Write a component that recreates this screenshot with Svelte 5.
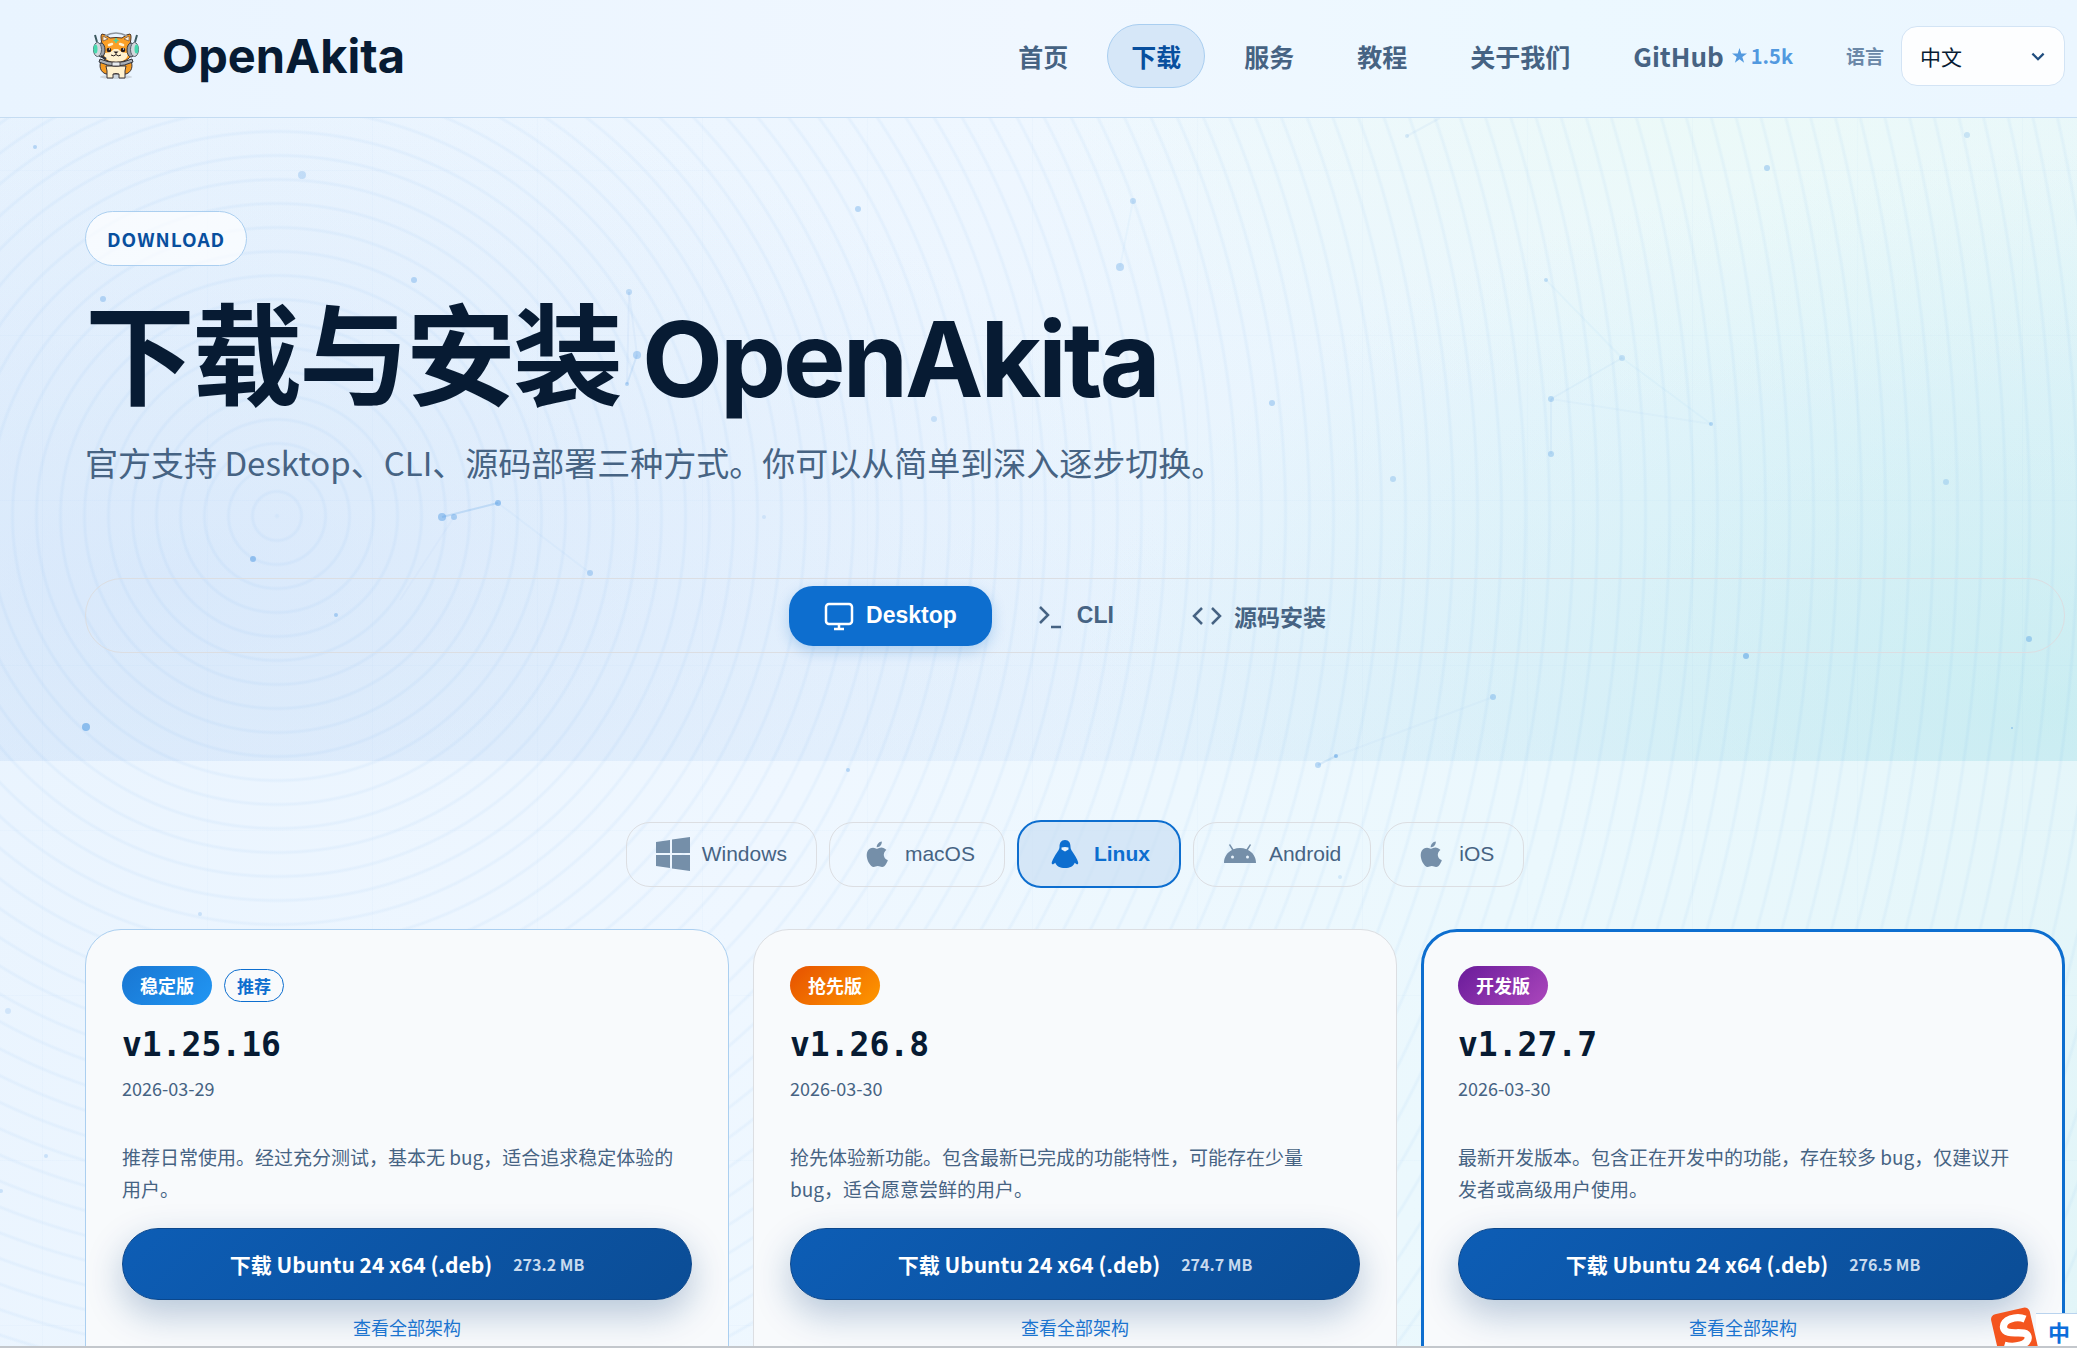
<script>
  let lang = $state('zh');
  const nav = [
    { label: '首页' },
    { label: '下载', active: true },
    { label: '服务' },
    { label: '教程' },
    { label: '关于我们' }
  ];
  const platforms = [
    { name: 'Windows', icon: 'windows' },
    { name: 'macOS', icon: 'apple' },
    { name: 'Linux', icon: 'linux', active: true },
    { name: 'Android', icon: 'android' },
    { name: 'iOS', icon: 'apple' }
  ];
  const releases = [
    { kind: 'stable', badge: '稳定版', recommended: true, version: 'v1.25.16', date: '2026-03-29', size: '273.2 MB',
      text: '推荐日常使用。经过充分测试，基本无 bug，适合追求稳定体验的用户。' },
    { kind: 'early', badge: '抢先版', version: 'v1.26.8', date: '2026-03-30', size: '274.7 MB',
      text: '抢先体验新功能。包含最新已完成的功能特性，可能存在少量 bug，适合愿意尝鲜的用户。' },
    { kind: 'dev', badge: '开发版', version: 'v1.27.7', date: '2026-03-30', size: '276.5 MB',
      text: '最新开发版本。包含正在开发中的功能，存在较多 bug，仅建议开发者或高级用户使用。' }
  ];
  // Particle field: x, y, radius, opacity
  const dots = [
    [35, 147, 2, 0.3], [302, 175, 4, 0.22], [858, 209, 3, 0.3], [1133, 201, 3, 0.25], [1407, 136, 2, 0.15],
    [1767, 168, 3, 0.3], [1967, 135, 3, 0.2], [414, 280, 3, 0.3], [103, 299, 3, 0.3], [629, 292, 3, 0.25],
    [1120, 267, 4, 0.28], [1546, 280, 2, 0.25], [637, 355, 4, 0.3], [627, 384, 2, 0.3], [934, 419, 3, 0.2],
    [1272, 403, 3, 0.3], [1622, 358, 3, 0.22], [1551, 399, 3, 0.28], [1711, 424, 2, 0.3], [1551, 454, 3, 0.28],
    [1393, 479, 3, 0.25], [1946, 482, 3, 0.22], [498, 503, 3, 0.45], [442, 517, 4, 0.4], [454, 517, 3, 0.35],
    [253, 559, 3, 0.45], [590, 573, 3, 0.3], [336, 615, 2, 0.35], [764, 517, 2, 0.12], [86, 727, 4, 0.5],
    [2029, 639, 3, 0.35], [1746, 656, 3, 0.45], [1493, 697, 3, 0.3], [2012, 728, 1, 0.4], [1336, 756, 2, 0.45],
    [1318, 765, 3, 0.3], [848, 770, 2, 0.3], [200, 914, 2, 0.2], [8, 1011, 3, 0.15], [46, 1156, 2, 0.2],
    [1340, 877, 2, 0.15], [1, 1191, 2, 0.2]
  ];
  const links = [
    [442, 517, 498, 503, 0.2], [498, 503, 590, 573, 0.04], [1336, 756, 1318, 765, 0.12], [629, 292, 627, 384, 0.06],
    [629, 292, 637, 355, 0.05], [637, 355, 627, 384, 0.12], [1546, 280, 1622, 358, 0.04], [1622, 358, 1551, 399, 0.05],
    [1551, 399, 1551, 454, 0.06], [1622, 358, 1711, 424, 0.04], [1551, 399, 1711, 424, 0.03], [1133, 201, 1120, 267, 0.04],
    [1493, 697, 1336, 756, 0.03], [454, 517, 400, 600, 0.03], [1407, 136, 1440, 118, 0.06]
  ];
</script>

{#snippet platformIcon(name)}
  {#if name === 'windows'}
    <svg class="picon" viewBox="0 0 34 34" aria-hidden="true"><path d="M0 5l14-2v13H0zM16 2.600L34 0v16H16zM0 18h14v13L0 29zM16 18h18v16l-18-2.600z" /></svg>
  {:else if name === 'apple'}
    <svg class="picon" viewBox="0 0 24 24" aria-hidden="true"><path d="M17.500 12.600c0-2.200 1.800-3.300 1.900-3.400-1-1.500-2.600-1.700-3.200-1.700-1.400-.1-2.700.8-3.400.8s-1.800-.8-2.900-.8C8.400 7.500 7 8.400 6.200 9.700c-1.600 2.800-.4 6.900 1.200 9.200.8 1.100 1.700 2.300 2.900 2.300s1.600-.7 3-.7 1.800.7 3 .7 2-1.100 2.800-2.200c.9-1.300 1.200-2.500 1.200-2.600-.1 0-2.800-1.100-2.800-3.800zM15.200 6c.6-.8 1-1.800.9-2.900-.9 0-2 .6-2.600 1.400-.6.7-1.100 1.700-1 2.700 1.100.1 2.100-.5 2.700-1.200z" /></svg>
  {:else if name === 'linux'}
    <svg class="picon" viewBox="0 0 34 34" aria-hidden="true">
      <path d="M17 3c-4 0-5.500 3-5.500 7 0 3-3.200 6-5 9.500-1.300 2.500-3.500 6-2.500 7.500.8 1 2.300-.6 3.300-1.300C8.500 29 12 31 17 31s8.500-2 9.700-5.300c1 .7 2.500 2.300 3.300 1.300 1-1.500-1.200-5-2.500-7.500-1.800-3.500-5-6.500-5-9.500 0-4-1.500-7-5.500-7z" />
      <path class="beak" d="M13.500 10.500q3.500-1 7 0v2L17 14.500l-3.500-2z" />
    </svg>
  {:else}
    <svg class="picon" viewBox="0 0 34 34" aria-hidden="true">
      <path d="M1 26c0-6 3.200-10.600 8-13L6 8l1-1 3.500 5.200c4-1.600 9-1.600 13 0L27 7l1 1-3 5c4.800 2.400 8 7 8 13z" />
      <circle class="hole" cx="9.500" cy="20" r="1.500" /><circle class="hole" cx="24.500" cy="20" r="1.500" />
    </svg>
  {/if}
{/snippet}

<div class="page">
  <div class="backdrop" aria-hidden="true">
    <div class="rings"></div>
    <svg class="particles">
      {#each links as [x1, y1, x2, y2, o]}
        <line {x1} {y1} {x2} {y2} stroke="#3c8fe0" stroke-width="2" stroke-opacity={o} />
      {/each}
      {#each dots as [cx, cy, r, o]}
        <circle {cx} {cy} {r} fill="#3c8fe0" fill-opacity={o} />
      {/each}
    </svg>
  </div>

  <header>
    <a class="brand" href="#home">
      <svg class="mascot" viewBox="0 0 56 56" aria-hidden="true">
        <ellipse cx="28" cy="49" rx="16" ry="2" fill="#cdd6df" />
        <path d="M13 33c-2 5-1 11 5 13h20c6-2 7-8 5-13z" fill="#f39a22" stroke="#3a3438" />
        <path d="M18 38h20l-1 5v7h-6v-4q-3-1-6 0v4h-6v-7z" fill="#fff1cf" stroke="#3a3438" />
        <path d="M14 16q-2-9 0-10 3 0 8 4 6-1 12 0 5-4 8-4 2 1 0 10c3 6 2 12-2 15-5 4-19 4-24 0-4-3-5-9-2-15z" fill="#fb9f25" stroke="#4a3428" />
        <path d="M15 13V8l5 3zM41 13V8l-5 3z" fill="#fff0d6" stroke="#5a4034" stroke-width=".6" />
        <path d="M16 25c4 0 7-1 10-4h4c3 3 6 4 10 4 0 6-5 9-12 9s-12-3-12-9z" fill="#fff1cf" />
        <path d="M17 8Q28 2 39 8" fill="none" stroke="#8d949c" stroke-width="1.500" />
        <path d="M21 17l3-1M35 17l-3-1" stroke="#fff1cf" stroke-width="2.500" stroke-linecap="round" />
        <path d="M28 10v5M25.500 12.500h5" stroke="#48d3a8" stroke-width="1.500" />
        <circle cx="21" cy="22" r="2.300" fill="#241c20" /><circle cx="35" cy="22" r="2.300" fill="#241c20" />
        <circle cx="21.500" cy="21" r=".7" fill="#fff" /><circle cx="35.500" cy="21" r=".7" fill="#fff" />
        <path d="M25.500 23.500h5L28 26z" fill="#241c20" />
        <path d="M23 27q3 2 5-.5 2 2.500 5 .5" fill="none" stroke="#241c20" />
        <ellipse cx="13" cy="22" rx="4" ry="7" fill="#9ba1a9" stroke="#33363c" /><ellipse cx="43" cy="22" rx="4" ry="7" fill="#9ba1a9" stroke="#33363c" />
        <ellipse cx="9.500" cy="21.500" rx="4" ry="7" fill="#d3d8dd" stroke="#55606a" /><ellipse cx="46.500" cy="21.500" rx="4" ry="7" fill="#d3d8dd" stroke="#55606a" />
        <ellipse cx="7.500" cy="21" rx="2" ry="4.500" fill="#46d9ae" /><ellipse cx="48.500" cy="21" rx="2" ry="4.500" fill="#46d9ae" />
        <path d="M9 14L7 7M47 14l2-7" stroke="#3d5a60" stroke-width="2" />
        <path d="M13 28l5 3" stroke="#33363c" stroke-width="2.500" />
        <path d="M12 31q16 7 32 0l1 3q-17 8-34 0z" fill="#a9afb7" stroke="#33363c" />
        <rect x="24" y="34" width="8" height="4" rx="1" fill="#e7ebef" stroke="#3a3438" stroke-width=".8" />
      </svg>
      <span>OpenAkita</span>
    </a>
    <nav>
      {#each nav as item}
        <a class:active={item.active} href="#{item.label}">{item.label}</a>
      {/each}
      <a class="github" href="#github">GitHub
        <small><svg viewBox="0 0 16 16" aria-hidden="true"><path d="M8 0l1.900 5.900H16l-5 3.700 1.900 6L8 12l-4.900 3.600 1.900-6-5-3.700h6.100z" /></svg>1.5k</small>
      </a>
    </nav>
    <label class="lang-label" for="lang">语言</label>
    <div class="lang">
      <select id="lang" bind:value={lang}>
        <option value="zh">中文</option>
        <option value="en">English</option>
      </select>
      <svg viewBox="0 0 16 16" aria-hidden="true"><path d="M3 5l5 5 5-5" /></svg>
    </div>
  </header>

  <main>
    <section class="hero">
      <span class="eyebrow">DOWNLOAD</span>
      <h1>下载与安装 <span>OpenAkita</span></h1>
      <p>官方支持 Desktop、CLI、源码部署三种方式。你可以从简单到深入逐步切换。</p>
      <div class="tabs">
        <button class="active"><svg viewBox="0 0 30 30" aria-hidden="true"><rect x="2" y="3" width="26" height="20" rx="3" /><path d="M15 23v5M10 28h10" /></svg>Desktop</button>
        <button><svg viewBox="0 0 30 30" aria-hidden="true"><path d="M5 6l8 8-8 8M16 26h10" /></svg>CLI</button>
        <button><svg viewBox="0 0 30 30" aria-hidden="true"><path d="M10 7l-8 8 8 8M20 7l8 8-8 8" /></svg>源码安装</button>
      </div>
    </section>

    <section class="downloads">
      <div class="platforms">
        {#each platforms as p}
          <button class:active={p.active}>{@render platformIcon(p.icon)}{p.name}</button>
        {/each}
      </div>
      <div class="cards">
        {#each releases as r}
          <article class={r.kind}>
            <div class="badges">
              <span class="badge">{r.badge}</span>
              {#if r.recommended}<span class="rec">推荐</span>{/if}
            </div>
            <h2>{r.version}</h2>
            <time datetime={r.date}>{r.date}</time>
            <p>{r.text}</p>
            <a class="get" href="#download-{r.kind}">下载 Ubuntu 24 x64 (.deb)<small>{r.size}</small></a>
            <a class="all" href="#all-{r.kind}">查看全部架构</a>
          </article>
        {/each}
      </div>
    </section>
  </main>

  <div class="ime">
    <svg viewBox="0 0 48 48" aria-hidden="true">
      <g transform="rotate(-13 24 24)">
        <rect x="4" y="4" width="38" height="46" rx="5" fill="#f4551f" />
        <path d="M36 15C29 10 14 10 14 19c0 9 21 5 21 13 0 8-15 8-24 3" fill="none" stroke="#fff" stroke-width="7" />
      </g>
    </svg>
    <span>中</span>
  </div>
</div>

<style>
  :global(body) { margin: 0; overflow: hidden; }
  .page, .page * { box-sizing: border-box; }
  .page {
    position: relative;
    height: 100vh;
    overflow: hidden;
    font-family: 'Noto Sans CJK SC', sans-serif;
    color: #466383;
    background: linear-gradient(110deg, #e8f3fe 0%, #eff7ff 42%, #ebf8fd 72%, #e2f5f8 100%);
    border-bottom: 2px solid #c3c7cc;
  }
  a { color: inherit; text-decoration: none; }
  button { font: inherit; color: inherit; background: none; border: 0; cursor: pointer; }
  .backdrop { position: absolute; inset: 0; z-index: 1; pointer-events: none; }
  .rings {
    position: absolute;
    inset: 0;
    background:
      repeating-linear-gradient(90deg, transparent 0 42px, rgba(20, 110, 210, 0.02) 42px 43px, transparent 43px 165px),
      repeating-linear-gradient(180deg, transparent 0 5px, rgba(20, 110, 210, 0.02) 5px 6px, transparent 6px 165px),
      repeating-radial-gradient(circle at 277px 516px, rgba(50, 135, 225, 0.05) 0 1px, transparent 3px 22px, rgba(50, 135, 225, 0.05) 24px);
  }
  .particles { position: absolute; width: 100%; height: 100%; }

  header {
    position: relative;
    z-index: 2;
    display: flex;
    align-items: center;
    height: 118px;
    padding: 0 12px 6px 88px;
    background: linear-gradient(90deg, #e9f4ff 0%, #f0f7ff 50%, #ecf8ff 75%, #ebf6ff 100%);
    border-bottom: 1px solid #c5dcf2;
  }
  .brand { display: flex; align-items: center; gap: 18px; margin-right: auto; color: #071b33; font: 700 47px/1 Inter, sans-serif; }
  .mascot { width: 56px; height: 56px; }
  nav { display: flex; align-items: center; gap: 15px; }
  nav a { display: flex; align-items: center; height: 64px; padding: 0 23px; border: 1px solid transparent; border-radius: 32px; font-size: 25px; font-weight: 700; white-space: nowrap; }
  nav a.active { color: #084f9e; background: #d6e7f8; border-color: #a9cef0; }
  nav .github { gap: 8px; font-size: 26px; padding-right: 22px; }
  .github small { display: flex; align-items: center; gap: 4px; color: #5299df; font-size: 20px; }
  .github small svg { width: 15px; fill: currentColor; }
  .lang-label { margin: 0 17px 0 30px; color: #6b88a8; font-size: 19px; font-weight: 700; }
  .lang { position: relative; }
  select { width: 164px; height: 60px; padding: 0 18px; appearance: none; border: 1px solid #d3e4f5; border-radius: 16px; background: #fdfeff; color: #071b33; font: 21px 'Noto Sans CJK SC', sans-serif; }
  .lang svg { position: absolute; right: 18px; top: 22px; width: 18px; fill: none; stroke: #1f4d7e; stroke-width: 2; pointer-events: none; }

  .hero {
    height: 643px;
    padding: 93px 12px 0 85px;
    background:
      radial-gradient(ellipse 1000px 500px at 8% 72%, rgba(200, 221, 247, 0.4), transparent),
      radial-gradient(ellipse 1000px 560px at 100% 92%, rgba(170, 232, 230, 0.4), transparent),
      radial-gradient(ellipse 700px 300px at 82% 0%, rgba(236, 250, 246, 0.7), transparent),
      linear-gradient(180deg, transparent, rgba(214, 231, 250, 0.4));
  }
  .eyebrow, h1, .hero p, .tabs, .platforms, .cards { position: relative; z-index: 2; }
  .eyebrow { display: inline-flex; align-items: center; height: 55px; padding: 0 21px; border: 1px solid #abcff0; border-radius: 28px; background: rgba(255, 255, 255, 0.7); color: #084f9e; font-size: 19px; font-weight: 700; letter-spacing: 1px; }
  h1 { margin: 16px 0 0; color: #071b33; font-size: 110px; line-height: 134px; font-weight: 700; letter-spacing: -3px; white-space: nowrap; }
  h1 span { font-family: Inter, sans-serif; font-size: 105px; line-height: 1; }
  .hero p { margin: 19px 0 0; font-size: 33px; line-height: 54px; }
  .tabs { display: flex; justify-content: center; align-items: center; gap: 8px; height: 75px; margin-top: 89px; padding: 7px; border: 1px solid #dcdee2; border-radius: 37px; }
  .tabs button { display: flex; align-items: center; gap: 12px; height: 60px; padding: 0 35px; border-radius: 24px; font: 700 23px 'Liberation Sans', 'Noto Sans CJK SC', sans-serif; }
  .tabs svg { width: 30px; height: 30px; fill: none; stroke: currentColor; stroke-width: 2.500; }
  .tabs .active { color: #fff; background: #0d6ecf; box-shadow: 0 5px 14px rgba(13, 110, 207, 0.25); }

  .downloads { padding: 58px 12px 0 85px; }
  .platforms { display: flex; justify-content: center; align-items: center; gap: 12px; height: 70px; }
  .platforms button { display: flex; align-items: center; gap: 12px; height: 65px; padding: 0 29px; border: 1px solid #dcdee2; border-radius: 24px; font: 21px 'Liberation Sans', sans-serif; }
  .platforms .active { height: 68px; color: #0d6ecf; background: rgba(200, 221, 243, 0.65); border: 2px solid #0d6ecf; font-weight: 700; }
  .picon { width: 34px; height: 34px; fill: #758fa9; }
  .active .picon { fill: #0d6ecf; }
  .beak, .hole { fill: #e8f3fc; }

  .cards { display: grid; grid-template-columns: repeat(3, 1fr); gap: 24px; margin-top: 40px; }
  article { display: flex; flex-direction: column; height: 560px; padding: 36px; border: 1px solid #dcdee2; border-radius: 36px; background: #f8fafc; }
  .stable { border-color: #abcff0; }
  .dev { padding: 34px; border: 3px solid #0d6ecf; }
  .badges { display: flex; align-items: center; gap: 12px; height: 39px; }
  .badge { padding: 0 18px; border-radius: 20px; color: #fff; font-size: 18px; line-height: 39px; font-weight: 700; }
  .stable .badge { background: linear-gradient(135deg, #1976d2, #2196f3); }
  .early .badge { background: linear-gradient(135deg, #e65100, #ff9800); }
  .dev .badge { background: linear-gradient(135deg, #6a1b9a, #ab47bc); }
  .rec { padding: 0 12px; border: 1px solid #0d6ecf; border-radius: 17px; color: #0d6ecf; font-size: 17px; line-height: 31px; font-weight: 700; }
  h2 { margin: 18px 0 0; color: #071b33; font: 700 33px/44px 'DejaVu Sans Mono', monospace; }
  time { margin-top: 6px; font-size: 18px; line-height: 30px; }
  article p { margin: 38px 0 0; font-size: 19px; line-height: 32px; }
  .get { display: flex; align-items: center; justify-content: center; gap: 21px; height: 72px; margin-top: 23px; border: 1px solid #0b478c; border-radius: 36px; color: #fff; background: linear-gradient(135deg, #0d5db5, #0b4d96); box-shadow: 0 14px 36px rgba(10, 65, 125, 0.28); font-size: 21px; font-weight: 700; flex: none; }
  .get small { color: #c8daee; font-size: 16px; }
  .all { margin-top: 14px; align-self: center; color: #1b74cf; font-size: 18px; line-height: 27px; }

  .ime { position: absolute; right: 0; bottom: -2px; z-index: 3; display: flex; align-items: center; height: 35px; padding: 0 7px 0 12px; background: #fff; border-top: 1px solid #b9d3ee; color: #0d6edb; font-size: 22px; font-weight: 700; }
  .ime svg { position: absolute; right: 37px; bottom: -8px; width: 50px; }
</style>
